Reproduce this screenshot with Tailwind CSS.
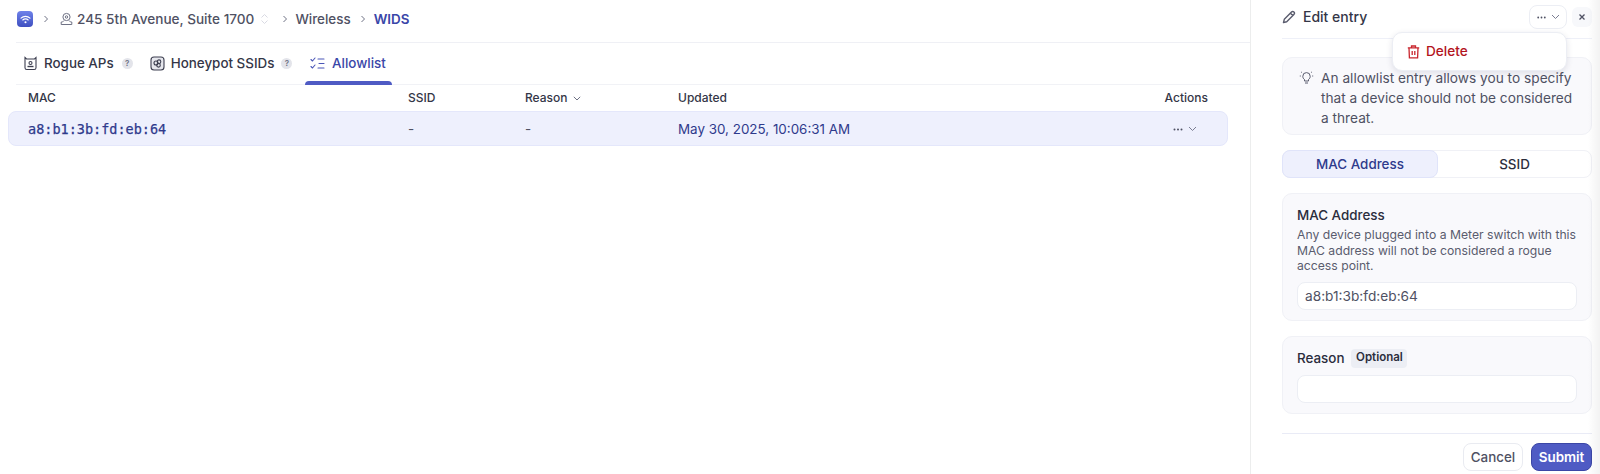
<!DOCTYPE html>
<html><head><meta charset="utf-8"><script src="https://cdn.jsdelivr.net/npm/@tailwindcss/browser@4"></script></head>
<body class="bg-white">
<div class="flex h-[474px] w-[1600px] overflow-hidden font-['Inter',sans-serif] text-[#343647]">
  <main class="w-[1250px] shrink-0">
    <div class="ml-4 flex h-[43px] items-center border-b border-[#eff0f5] pb-[4px] text-[13.400px] font-medium leading-5">
      <span class="ml-px flex h-4 w-4 items-center justify-center rounded-[4px] bg-gradient-to-b from-[#6f82ea] to-[#3f4fc0]">
        <svg width="11" height="9" viewBox="0 0 11 9" fill="none" stroke="#fff" stroke-width="1.100" stroke-linecap="round"><path d="M1 3.200a6.400 6.400 0 0 1 9 0M2.800 5a3.800 3.800 0 0 1 5.400 0"/><circle cx="5.500" cy="7.200" r=".5" fill="#fff"/></svg>
      </span>
      <svg class="ml-[10px]" width="6" height="8" viewBox="0 0 6 8" fill="none" stroke="#6f7285" stroke-width="1"><path d="M1.500 1l3 3-3 3"/></svg>
      <svg class="ml-[11px]" width="13" height="14" viewBox="0 0 13 14" fill="none" stroke="#6f7285" stroke-width="1"><circle cx="6.500" cy="5" r="3.600"/><circle cx="6.500" cy="5" r="1.200"/><path d="M4 8.500L2.500 10H1.200v2.500h10.600V10h-1.300L9 8.500"/></svg>
      <span class="ml-[4px] text-[13.600px] text-[#4f5163]">245 5th Avenue, Suite 1700</span>
      <svg class="ml-[6px]" width="9" height="12" viewBox="0 0 9 12" fill="none" stroke="#d9dae3" stroke-width="1"><path d="M1.500 4.500l3-3 3 3M1.500 7.500l3 3 3-3"/></svg>
      <svg class="ml-[13px]" width="6" height="8" viewBox="0 0 6 8" fill="none" stroke="#6f7285" stroke-width="1"><path d="M1.500 1l3 3-3 3"/></svg>
      <span class="ml-[7px] text-[#4f5163]">Wireless</span>
      <svg class="ml-[9px]" width="6" height="8" viewBox="0 0 6 8" fill="none" stroke="#6f7285" stroke-width="1"><path d="M1.500 1l3 3-3 3"/></svg>
      <span class="ml-[8px] font-semibold text-[#3a46a8]">WIDS</span>
    </div>
    <div class="ml-4 flex h-[42px] items-stretch border-b border-[#f1f2f6] text-[13.400px] font-medium">
      <div class="ml-[7px] flex items-center pb-[1px]">
        <svg width="15" height="15" viewBox="0 0 15 15" fill="none" stroke="#3d3f50" stroke-width="1.100"><path d="M2 1.500l1.500 1.500h8L13 1.500v10.200a1.800 1.800 0 0 1-1.800 1.800H3.800A1.800 1.800 0 0 1 2 11.700z"/><circle cx="7.500" cy="7" r="1.500"/><path d="M4.500 10.500h6" stroke-width="1.400"/></svg>
        <span class="ml-[6px]">Rogue APs</span>
        <span class="ml-2 flex h-[11px] w-[11px] items-center justify-center rounded-full bg-[#e3e4ea] text-[8px] font-semibold text-[#6f7285]">?</span>
      </div>
      <div class="ml-[17px] flex items-center pb-[1px]">
        <svg width="15" height="15" viewBox="0 0 15 15" fill="none" stroke="#3d3f50" stroke-width="1.100"><rect x="1" y="1" width="13" height="13" rx="3" fill="#e6e7ed"/><circle cx="6" cy="7" r="2"/><circle cx="9" cy="5.700" r="1.800"/><circle cx="8.500" cy="9.300" r="1.800"/></svg>
        <span class="ml-[6px]">Honeypot SSIDs</span>
        <span class="ml-[7px] flex h-[11px] w-[11px] items-center justify-center rounded-full bg-[#e3e4ea] text-[8px] font-semibold text-[#6f7285]">?</span>
      </div>
      <div class="relative ml-[13px] flex w-[87px] items-center justify-center pb-[1px] pr-[2px] text-[#3a46a8]">
        <svg width="15" height="13" viewBox="0 0 15 13" fill="none" stroke="#4b57b8" stroke-width="1.100" stroke-linecap="round" stroke-linejoin="round"><path d="M1 2.500l1.500 1.500L5 1M1 9.500L2.500 11 5 8M8 2h6M9 6.500h5M8 11h6"/></svg>
        <span class="ml-[7px]">Allowlist</span>
        <span class="absolute bottom-[-1px] left-0 right-0 h-[4px] rounded-t-[4px] bg-[#4f5bc4]"></span>
      </div>
    </div>
    <div class="flex h-[26px] items-center pl-[28px] pr-[42px] text-[12px] font-medium text-[#343647]">
      <span class="w-[380px]">MAC</span>
      <span class="w-[117px]">SSID</span>
      <span class="flex w-[153px] items-center gap-[5px]">Reason <svg width="8" height="5" viewBox="0 0 8 5" fill="none" stroke="#6f7285" stroke-width="1"><path d="M.8.800L4 4 7.200.800"/></svg></span>
      <span class="flex-1">Updated</span>
      <span>Actions</span>
    </div>
    <div class="ml-2 flex h-[35px] w-[1220px] items-center rounded-[8px] border border-[#e4e7fb] bg-[#eef0fd] pl-[19px] pr-[30px] pt-px text-[13.400px] text-[#2e3a8c]">
      <span class="w-[380px] font-['DejaVu_Sans_Mono',monospace] text-[13.500px] [-webkit-text-stroke:0.25px]">a8:b1:3b:fd:eb:64</span>
      <span class="w-[117px] text-[#4f5163]">-</span>
      <span class="w-[153px] text-[#4f5163]">-</span>
      <span class="flex-1">May 30, 2025, 10:06:31 AM</span>
      <span class="flex items-center gap-[5px]">
        <svg width="10" height="3" viewBox="0 0 10 3" fill="#4f5163"><circle cx="1.500" cy="1.500" r="1"/><circle cx="5" cy="1.500" r="1"/><circle cx="8.500" cy="1.500" r="1"/></svg>
        <svg width="9" height="6" viewBox="0 0 9 6" fill="none" stroke="#7a7d92" stroke-width="1"><path d="M1 1l3.500 3.500L8 1"/></svg>
      </span>
    </div>
  </main>
  <aside class="relative w-[350px] shrink-0 border-l border-[#eceded] pl-[31px] pr-2 text-[13.400px]">
    <div class="flex h-[39px] items-center border-b border-[#eef0f8] pb-[4px]">
      <svg width="14" height="14" viewBox="0 0 14 14" fill="none" stroke="#5a5c6e" stroke-width="1.400" stroke-linejoin="round"><path d="M1.500 12.500l.8-3.200 7.200-7.200a1.500 1.500 0 0 1 2.400 2.400l-7.200 7.200zM8.500 3.200l2.300 2.300"/></svg>
      <span class="ml-[7px] text-[14px] font-medium leading-5">Edit entry</span>
      <div class="ml-auto flex h-[24px] w-[38px] items-center justify-center gap-[5px] rounded-[8px] border border-[#eceef4] bg-white">
        <svg width="9" height="3" viewBox="0 0 9 3" fill="#4f5163"><circle cx="1.200" cy="1.500" r=".9"/><circle cx="4.500" cy="1.500" r=".9"/><circle cx="7.800" cy="1.500" r=".9"/></svg>
        <svg width="9" height="6" viewBox="0 0 9 6" fill="none" stroke="#7a7d92" stroke-width="1"><path d="M1 1l3.500 3.500L8 1"/></svg>
      </div>
      <div class="ml-[5px] flex h-[20px] w-[20px] items-center justify-center rounded-[6px] bg-[#f7f8fb]">
        <svg width="8" height="8" viewBox="0 0 8 8" fill="none" stroke="#4f5163" stroke-width="1.300"><path d="M1.500 1.500l5 5M6.500 1.500l-5 5"/></svg>
      </div>
    </div>
    <div class="mt-[18px] flex h-[78px] rounded-[10px] border border-[#f0f1f6] bg-[#f9f9fc] pl-4 pr-[16px] pt-[10px] leading-[20px] text-[#4f5163]">
      <svg class="mt-[2px] shrink-0" width="15" height="15" viewBox="0 0 15 15" fill="none" stroke="#5a5c6e" stroke-width="1"><path d="M5.500 11V9.500C4.300 8.700 3.800 7.600 3.800 6.300a3.700 3.700 0 0 1 7.400 0c0 1.300-.5 2.400-1.700 3.200V11zM6 13h3M.8 6h1M13.200 6h1M2 1.800l.8.700M13 1.800l-.8.700"/></svg>
      <p class="ml-[7px] text-[13.700px]">An allowlist entry allows you to specify that a device should not be considered a threat.</p>
    </div>
    <div class="mt-[15px] flex h-[28px] rounded-[8px] border border-[#f0f1f6] font-medium">
      <div class="ml-[-1px] mt-[-1px] flex h-[28px] w-[156px] items-center justify-center rounded-[8px] border border-[#e0e4fa] bg-[#eef0fd] text-[#2e3a8c]">MAC Address</div>
      <div class="flex flex-1 items-center justify-center text-[#2b2d3c]">SSID</div>
    </div>
    <div class="mt-[15px] h-[128px] rounded-[10px] border border-[#f0f1f6] bg-[#f9f9fc] px-[14px] pt-[11px]">
      <div class="font-medium leading-[20px] text-[#2b2d3c]">MAC Address</div>
      <p class="mt-[2px] w-[280px] text-[12.200px] leading-[15.600px] text-[#5a5c6e]">Any device plugged into a Meter switch with this MAC address will not be considered a rogue access point.</p>
      <div class="mt-[8px] flex h-[28px] w-[280px] items-center rounded-[8px] border border-[#eceef4] bg-white pl-[7px] text-[13.700px] text-[#4f5163]">a8:b1:3b:fd:eb:64</div>
    </div>
    <div class="mt-[15px] h-[78px] rounded-[10px] border border-[#f0f1f6] bg-[#f9f9fc] px-[14px] pt-[11px]">
      <div class="flex h-[20px] items-center font-medium text-[#2b2d3c]">Reason
        <span class="ml-[7px] flex h-[19px] w-[56px] items-center justify-center rounded-[4px] bg-[#eceef4] text-[11.500px] font-semibold">Optional</span>
      </div>
      <div class="mt-[7px] h-[28px] w-[280px] rounded-[8px] border border-[#eceef4] bg-white"></div>
    </div>
    <div class="mt-[19px] flex justify-end gap-[8px] border-t border-[#e9ebf6] pt-[9px] font-medium">
      <div class="flex h-[28px] w-[60px] items-center justify-center rounded-[8px] border border-[#e9ebf1] text-[#4f5163]">Cancel</div>
      <div class="flex h-[28px] w-[61px] items-center justify-center rounded-[8px] border border-[#3b46a6] bg-[#4f5bc4] font-semibold text-white">Submit</div>
    </div>
    <div class="absolute left-[141px] top-[32px] flex h-[39px] w-[175px] items-center rounded-[10px] border border-[#eceef4] bg-white pl-[14px] text-[13.600px] font-medium text-[#b3141d] shadow-[0_2px_6px_rgba(30,35,70,0.12)]">
      <svg width="13" height="14" viewBox="0 0 13 14" fill="none" stroke="#c9252d" stroke-width="1.300"><path d="M.8 2.800h11.400M4.500 2.800V1h4v1.800M2 2.800l.4 10h8.200l.4-10M5.200 6v4M7.800 6v4"/></svg>
      <span class="ml-[6px]">Delete</span>
    </div>
    <div class="absolute bottom-0 right-0 top-0 w-[12px] bg-gradient-to-r from-transparent to-black/5"></div>
  </aside>
</div>
</body></html>
